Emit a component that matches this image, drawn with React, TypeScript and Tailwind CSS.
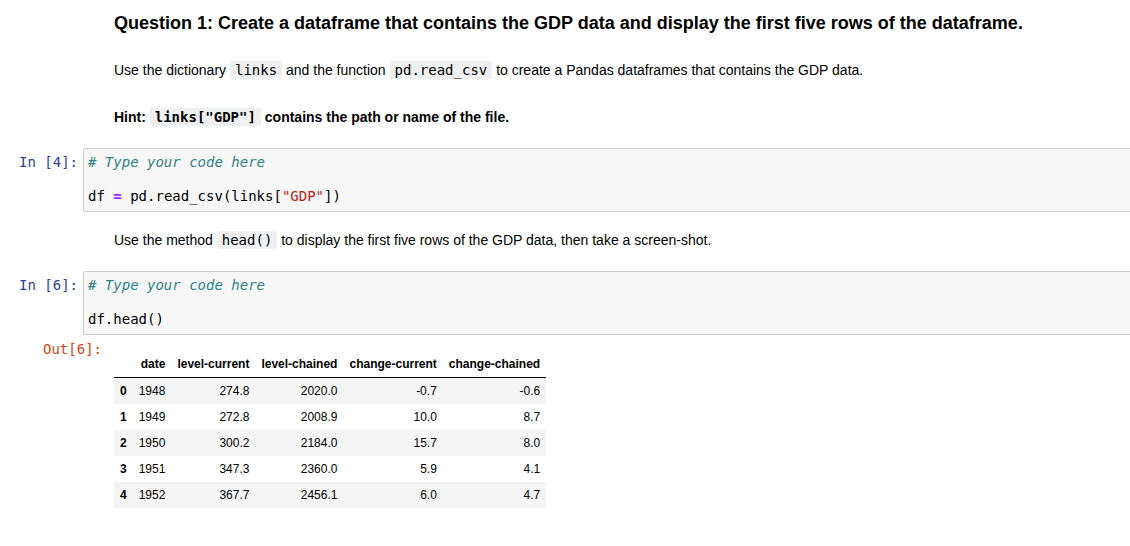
const rows = [
  { i: 0, date: '1948', lc: '274.8', lch: '2020.0', cc: '-0.7', cch: '-0.6' },
  { i: 1, date: '1949', lc: '272.8', lch: '2008.9', cc: '10.0', cch: '8.7' },
  { i: 2, date: '1950', lc: '300.2', lch: '2184.0', cc: '15.7', cch: '8.0' },
  { i: 3, date: '1951', lc: '347.3', lch: '2360.0', cc: '5.9', cch: '4.1' },
  { i: 4, date: '1952', lc: '367.7', lch: '2456.1', cc: '6.0', cch: '4.7' },
];

const mono = "font-['DejaVu_Sans_Mono',monospace]";

const Code = ({ children, bold }: { children: React.ReactNode; bold?: boolean }) => (
  <code
    className={`${mono} text-[14px] bg-[#eff0f1] rounded-[2px] px-[5px] py-[1px] ${bold ? 'font-bold' : ''}`}
  >
    {children}
  </code>
);

const CodeCell = ({ n, children }: { n: number; children: React.ReactNode }) => (
  <div className="flex">
    <div
      className={`${mono} w-[83px] shrink-0 text-right pr-[5px] pt-[6px] text-[14px] leading-[17px] text-[#303F9F]`}
    >
      In [{n}]:
    </div>
    <div
      className={`${mono} w-[1060px] shrink-0 bg-[#f7f7f7] border border-[#cfcfcf] rounded-[2px] pl-[4px] pt-[5px] pb-[6px] text-[14px] leading-[17px] text-black whitespace-pre`}
    >
      {children}
    </div>
  </div>
);

export default function App() {
  return (
    <div className="w-[1130px] h-[546px] overflow-hidden bg-white text-black font-['Liberation_Sans',Arial,sans-serif]">
      <div className="pl-[114px]">
        <h3 className="pt-[12px] text-[18px] leading-[22px] font-bold">
          Question 1: Create a dataframe that contains the GDP data and display the first five rows of the dataframe.
        </h3>
        <p className="mt-[26px] text-[14px] leading-[20px]">
          Use the dictionary <Code>links</Code> and the function <Code>pd.read_csv</Code> to create a Pandas
          dataframes that contains the GDP data.
        </p>
        <p className="mt-[27px] text-[14px] leading-[20px] font-bold">
          Hint: <Code bold>links["GDP"]</Code> contains the path or name of the file.
        </p>
      </div>

      <div className="mt-[21px]">
        <CodeCell n={4}>
          <span className="italic text-[#2f8383]"># Type your code here</span>
          {'\n\n'}df <span className="font-bold text-[#AA22FF]">=</span> pd.read_csv(links[
          <span className="text-[#BA2121]">"GDP"</span>])
        </CodeCell>
      </div>

      <p className="mt-[18px] pl-[114px] text-[14px] leading-[20px]">
        Use the method <Code>head()</Code> to display the first five rows of the GDP data, then take a screen-shot.
      </p>

      <div className="mt-[21px]">
        <CodeCell n={6}>
          <span className="italic text-[#2f8383]"># Type your code here</span>
          {'\n\n'}df.head()
        </CodeCell>
      </div>

      <div className="flex">
        <div
          className={`${mono} w-[114px] shrink-0 text-right pr-[12px] pt-[6px] text-[14px] leading-[17px] text-[#D84315]`}
        >
          Out[6]:
        </div>
        <table className="mt-[16px] text-[12px] leading-[14px] border-collapse">
          <thead className="border-b border-black">
            <tr>
              <th className="px-[6px] py-[6px]"></th>
              {['date', 'level-current', 'level-chained', 'change-current', 'change-chained'].map((h) => (
                <th key={h} className="px-[6px] py-[6px] text-right font-bold">
                  {h}
                </th>
              ))}
            </tr>
          </thead>
          <tbody>
            {rows.map((r) => (
              <tr key={r.i} className={r.i % 2 === 0 ? 'bg-[#f5f5f5]' : ''}>
                <th className="px-[6px] py-[6px] text-right font-bold">{r.i}</th>
                <td className="px-[6px] py-[6px] text-right">{r.date}</td>
                <td className="px-[6px] py-[6px] text-right">{r.lc}</td>
                <td className="px-[6px] py-[6px] text-right">{r.lch}</td>
                <td className="px-[6px] py-[6px] text-right">{r.cc}</td>
                <td className="px-[6px] py-[6px] text-right">{r.cch}</td>
              </tr>
            ))}
          </tbody>
        </table>
      </div>
    </div>
  );
}
